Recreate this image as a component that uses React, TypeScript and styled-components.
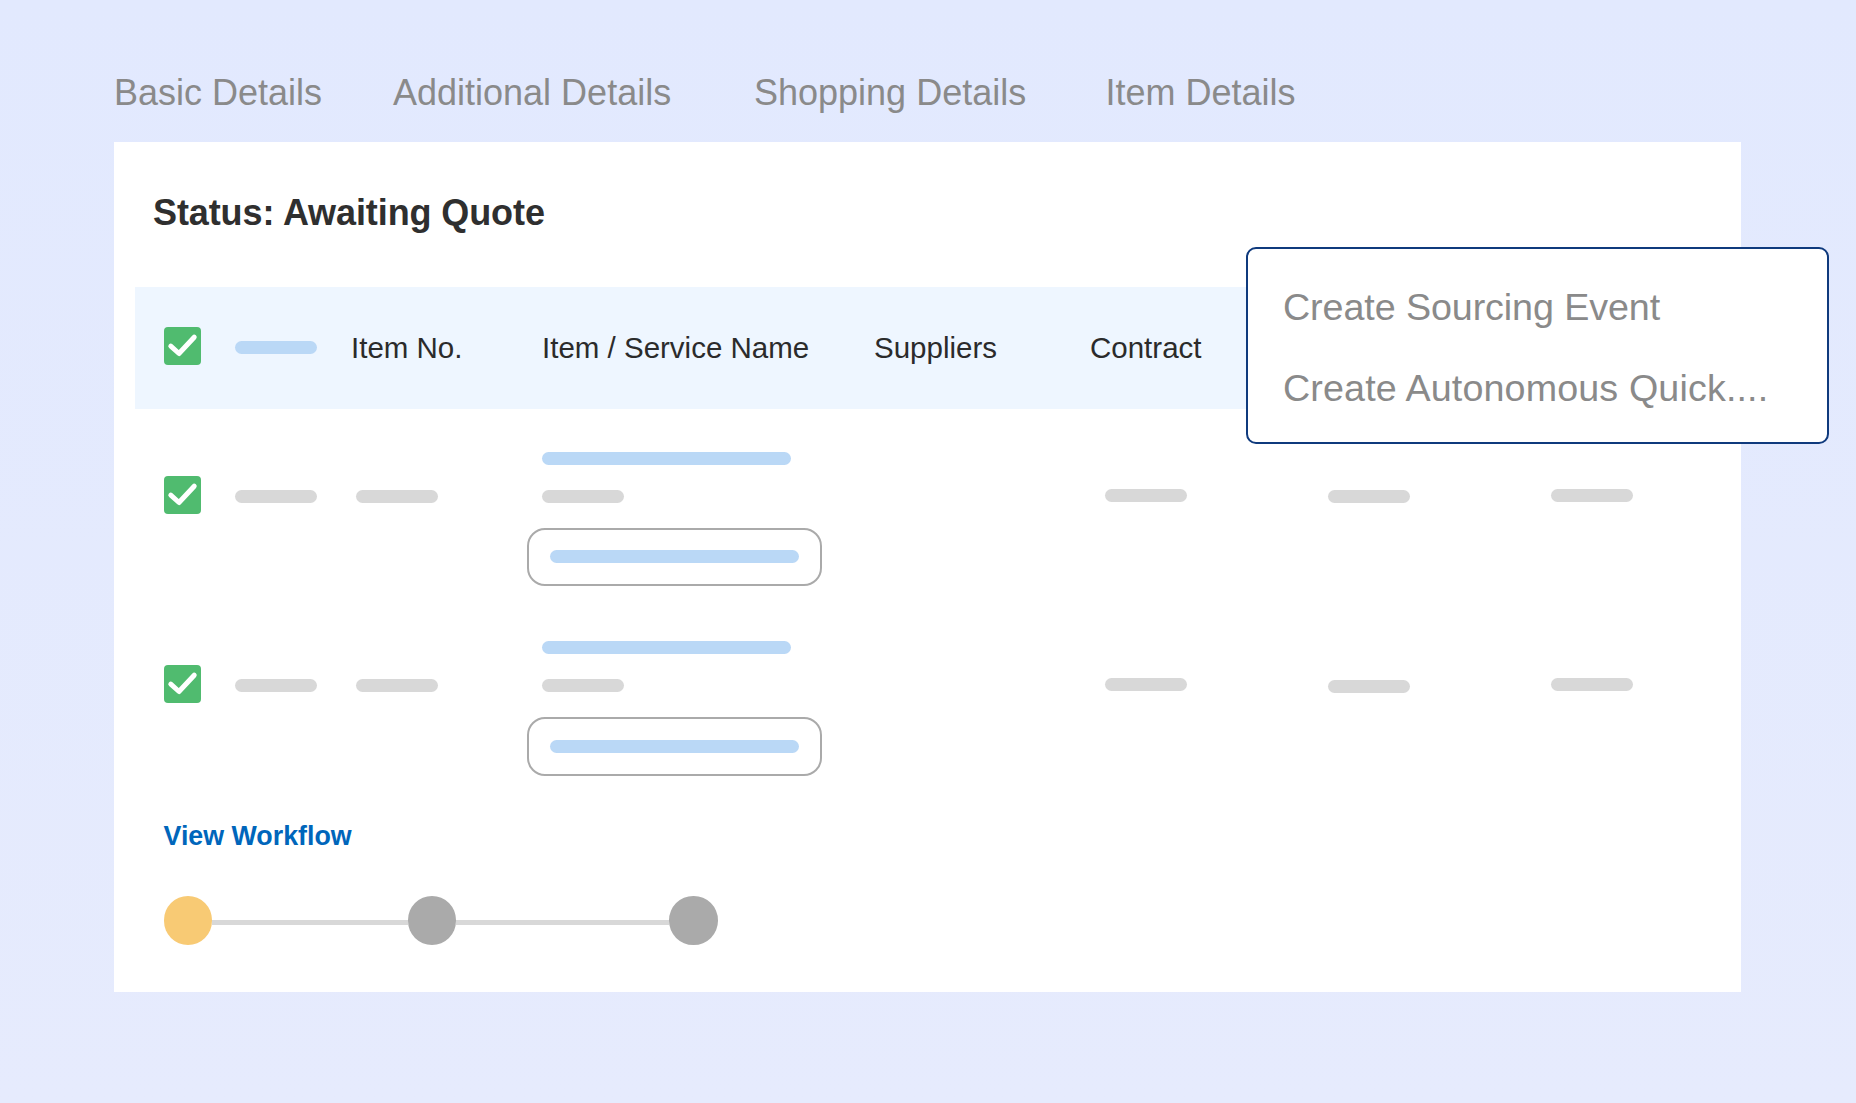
import React from "react";
import styled, { createGlobalStyle } from "styled-components";

const Global = createGlobalStyle`
  html, body { margin: 0; padding: 0; background: #e4eafe; }
  body { font-family: "Liberation Sans", Arial, sans-serif; }
`;

const Page = styled.div`
  width: 1856px;
  height: 1103px;
  box-sizing: border-box;
  padding: 71px 0 0 114px;
  overflow: hidden;
  background: linear-gradient(180deg, #e2e9fe 0%, #e6ebfd 100%);
`;

const Tabs = styled.nav`
  display: grid;
  grid-template-columns: 279px 361px 351.5px auto;
  height: 71px;
`;

const Tab = styled.span`
  font-size: 36px;
  line-height: 44px;
  color: #8a8a8a;
`;

const Card = styled.section`
  position: relative;
  width: 1627px;
  height: 850px;
  box-sizing: border-box;
  background: #fff;
  padding: 49px 21px 0;
`;

const Title = styled.h1`
  margin: 0 0 0 18px;
  font-size: 36px;
  line-height: 44px;
  font-weight: 700;
  letter-spacing: -0.1px;
  color: #2f2f2f;
`;

const HeaderRow = styled.div`
  display: grid;
  grid-template-columns: 71px 116px 191px 332px 216px auto;
  align-items: center;
  height: 122px;
  margin-top: 51.5px;
  padding-left: 29px;
  background: #eef6ff;
`;

const HeaderCell = styled.span`
  font-size: 29.5px;
  line-height: 34px;
  color: #2b2b2b;
`;

const Row = styled.div<{ $top: number }>`
  display: grid;
  grid-template-columns: 71px 121px 171.5px 577.5px 223px 222.5px auto;
  align-items: start;
  padding-left: 29px;
  margin-top: ${(p) => p.$top}px;
`;

const Pill = styled.div<{ $blue?: boolean; $w?: number; $top?: number }>`
  width: ${(p) => p.$w ?? 82}px;
  height: 13px;
  margin-top: ${(p) => p.$top ?? 0}px;
  border-radius: 7px;
  background: ${(p) => (p.$blue ? "#bad8f6" : "#d8d8d8")};
`;

const NameCell = styled.div`
  display: flex;
  flex-direction: column;
  align-items: flex-start;
  gap: 25px;
  padding-left: 14.5px;
`;

const ActionBox = styled.div`
  display: flex;
  align-items: center;
  box-sizing: border-box;
  width: 295px;
  height: 58.5px;
  margin-left: -15.5px;
  padding-left: 21.5px;
  border: 2px solid #aaaaaa;
  border-radius: 18px;
`;

const CheckBox = styled.svg<{ $top?: number }>`
  display: block;
  width: 37px;
  height: 38px;
  margin-top: ${(p) => p.$top ?? 0}px;
`;

const WorkflowLink = styled.a`
  display: block;
  margin: 44.5px 0 0 28.5px;
  font-size: 26.8px;
  line-height: 32px;
  font-weight: 700;
  color: #0066bb;
`;

const Stepper = styled.div`
  display: flex;
  align-items: center;
  margin: 44px 0 0 28.5px;
`;

const Dot = styled.div<{ $active?: boolean }>`
  flex: none;
  width: 48.5px;
  height: 48.5px;
  border-radius: 50%;
  background: ${(p) => (p.$active ? "#f8ca74" : "#aaaaaa")};
`;

const Connector = styled.div<{ $w: number }>`
  width: ${(p) => p.$w}px;
  height: 4.5px;
  margin-top: 4px;
  background: #d8d8d8;
`;

const Menu = styled.div`
  position: absolute;
  left: 1132px;
  top: 105px;
  width: 583px;
  height: 197px;
  box-sizing: border-box;
  display: flex;
  flex-direction: column;
  gap: 36.5px;
  padding: 36px 0 0 35px;
  background: #fff;
  border: 2px solid #0f3a7d;
  border-radius: 10px;
`;

const MenuItem = styled.div<{ $track: number }>`
  font-size: 37.7px;
  line-height: 44px;
  letter-spacing: ${(p) => p.$track}px;
  color: #8a8a8a;
  white-space: nowrap;
`;

const Check = ({ top }: { top?: number }) => (
  <CheckBox viewBox="0 0 37 38" $top={top}>
    <rect width="37" height="38" rx="4" fill="#50bb6f" />
    <path
      d="M6.8 19.2 L15 26.5 L30.2 10.2"
      fill="none"
      stroke="#fff"
      strokeWidth="5"
      strokeLinecap="round"
      strokeLinejoin="round"
    />
  </CheckBox>
);

const ItemRow = ({ top }: { top: number }) => (
  <Row $top={top}>
    <Check top={24} />
    <Pill $top={38} />
    <Pill $top={38} />
    <NameCell>
      <Pill $blue $w={249} />
      <Pill />
      <ActionBox>
        <Pill $blue $w={249} />
      </ActionBox>
    </NameCell>
    <Pill $top={37} />
    <Pill $top={38.7} />
    <Pill $top={37} />
  </Row>
);

export default function App() {
  return (
    <Page>
      <Global />
      <Tabs>
        <Tab>Basic Details</Tab>
        <Tab>Additional Details</Tab>
        <Tab>Shopping Details</Tab>
        <Tab>Item Details</Tab>
      </Tabs>
      <Card>
        <Title>Status: Awaiting Quote</Title>
        <HeaderRow>
          <Check top={-3} />
          <Pill $blue />
          <HeaderCell>Item No.</HeaderCell>
          <HeaderCell>Item / Service Name</HeaderCell>
          <HeaderCell>Suppliers</HeaderCell>
          <HeaderCell>Contract</HeaderCell>
        </HeaderRow>
        <ItemRow top={43} />
        <ItemRow top={55} />
        <WorkflowLink>View Workflow</WorkflowLink>
        <Stepper>
          <Dot $active />
          <Connector $w={195.5} />
          <Dot />
          <Connector $w={213} />
          <Dot />
        </Stepper>
        <Menu>
          <MenuItem $track={-0.1}>Create Sourcing Event</MenuItem>
          <MenuItem $track={0.13}>Create Autonomous Quick....</MenuItem>
        </Menu>
      </Card>
    </Page>
  );
}
